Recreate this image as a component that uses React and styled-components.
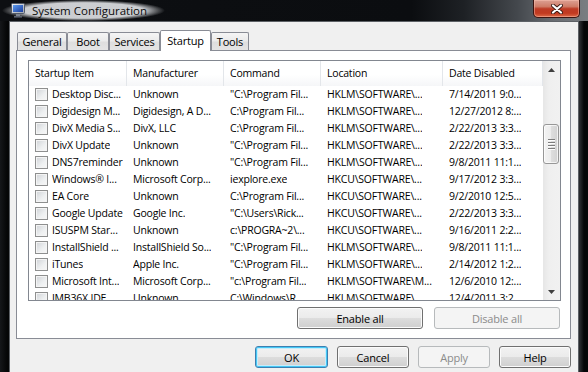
import React from 'react'
import styled, { createGlobalStyle } from 'styled-components'

const GlobalStyle = createGlobalStyle`
  html, body {
    margin: 0;
    padding: 0;
    background: #000;
    overflow: hidden;
  }
  body {
    font-family: "Segoe UI", "Open Sans", sans-serif;
    font-size: 10.5px;
    letter-spacing: -0.2px;
    color: #000;
  }
  * { box-sizing: border-box; }
`

const COLS = [98, 97, 97, 122, 100]
const HEADERS = ['Startup Item', 'Manufacturer', 'Command', 'Location', 'Date Disabled']

const ROWS = [
  ['Desktop Disc...', 'Unknown', '"C:\\Program Fil...', 'HKLM\\SOFTWARE\\...', '7/14/2011 9:0...'],
  ['Digidesign M...', 'Digidesign, A D...', 'C:\\Program Fil...', 'HKLM\\SOFTWARE\\...', '12/27/2012 8:...'],
  ['DivX Media S...', 'DivX, LLC', 'C:\\Program Fil...', 'HKLM\\SOFTWARE\\...', '2/22/2013 3:3...'],
  ['DivX Update', 'Unknown', '"C:\\Program Fil...', 'HKLM\\SOFTWARE\\...', '2/22/2013 3:3...'],
  ['DNS7reminder', 'Unknown', '"C:\\Program Fil...', 'HKLM\\SOFTWARE\\...', '9/8/2011 11:1...'],
  ['Windows® I...', 'Microsoft Corp...', 'iexplore.exe', 'HKCU\\SOFTWARE\\...', '9/17/2012 3:3...'],
  ['EA Core', 'Unknown', 'C:\\Program Fil...', 'HKCU\\SOFTWARE\\...', '9/2/2010 12:5...'],
  ['Google Update', 'Google Inc.', '"C:\\Users\\Rick...', 'HKCU\\SOFTWARE\\...', '2/22/2013 3:3...'],
  ['ISUSPM Star...', 'Unknown', 'c:\\PROGRA~2\\...', 'HKCU\\SOFTWARE\\...', '9/16/2011 2:2...'],
  ['InstallShield ...', 'InstallShield So...', '"C:\\Program Fil...', 'HKLM\\SOFTWARE\\...', '9/8/2011 11:1...'],
  ['iTunes', 'Apple Inc.', '"C:\\Program Fil...', 'HKLM\\SOFTWARE\\...', '2/14/2012 1:2...'],
  ['Microsoft Int...', 'Microsoft Corp...', '"c:\\Program Fil...', 'HKLM\\SOFTWARE\\M...', '12/6/2010 12:...'],
  ['JMB36X IDE...', 'Unknown', 'C:\\Windows\\R...', 'HKLM\\SOFTWARE\\...', '12/4/2011 3:2...'],
]

const TABS = [
  { name: 'General', w: 50 },
  { name: 'Boot', w: 42 },
  { name: 'Services', w: 51 },
  { name: 'Startup', w: 51, active: true },
  { name: 'Tools', w: 38 },
]

function MonitorIcon() {
  return (
    <svg width="14" height="15" viewBox="0 0 14 15">
      <defs>
        <linearGradient id="bezel" x1="0" y1="0" x2="1" y2="1">
          <stop offset="0" stopColor="#f4f5f7" />
          <stop offset="1" stopColor="#9aa1ab" />
        </linearGradient>
        <linearGradient id="screen" x1="0" y1="0" x2="1" y2="1">
          <stop offset="0" stopColor="#5d9cf0" />
          <stop offset="1" stopColor="#1b3d9c" />
        </linearGradient>
      </defs>
      <rect x="0.5" y="0.5" width="13" height="10" rx="1" fill="url(#bezel)" stroke="#525a68" />
      <rect x="2" y="2" width="10" height="7" fill="url(#screen)" />
      <rect x="5" y="11" width="4" height="2" fill="#7d8490" />
      <rect x="3" y="13" width="8" height="1.6" fill="#5c6370" />
    </svg>
  )
}

function CloseGlyph() {
  return (
    <svg width="12" height="10" viewBox="0 0 12 10">
      <path d="M2 1.5 L10 8.5 M10 1.5 L2 8.5" stroke="#3b1a14" strokeWidth="4" strokeLinecap="round" />
      <path d="M2 1.5 L10 8.5 M10 1.5 L2 8.5" stroke="#fff" strokeWidth="2.2" strokeLinecap="round" />
    </svg>
  )
}

function Arrow({ down }) {
  return (
    <svg width="7" height="4" viewBox="0 0 7 4">
      <path d={down ? 'M0 0 H7 L3.5 4 Z' : 'M0 4 H7 L3.5 0 Z'} fill="#3f3f3f" />
    </svg>
  )
}

export default function App() {
  return (
    <Window>
      <GlobalStyle />
      <TitleBar>
        <TitleGlow>
          <MonitorIcon />
          <TitleText>System Configuration</TitleText>
        </TitleGlow>
        <CloseButton>
          <CloseGlyph />
        </CloseButton>
      </TitleBar>
      <Body>
        <Client>
          <TabStrip>
            {TABS.map(t => (
              <Tab key={t.name} $w={t.w} $active={t.active}>{t.name}</Tab>
            ))}
          </TabStrip>
          <Panel>
            <ListView>
              <Grid>
                <Header>
                  {HEADERS.map((h, i) => (
                    <HeaderCell key={h} $w={COLS[i]}>{h}</HeaderCell>
                  ))}
                </Header>
                {ROWS.map((r, ri) => (
                  <Row key={ri}>
                    <Cell $w={COLS[0]}>
                      <Checkbox />
                      <CellText>{r[0]}</CellText>
                    </Cell>
                    {r.slice(1).map((v, ci) => (
                      <Cell key={ci} $w={COLS[ci + 1]}>
                        <CellText>{v}</CellText>
                      </Cell>
                    ))}
                  </Row>
                ))}
              </Grid>
              <ScrollBar>
                <ArrowButton><Arrow /></ArrowButton>
                <Track>
                  <Thumb>
                    <Grip />
                    <Grip />
                    <Grip />
                    <Grip />
                  </Thumb>
                </Track>
                <ArrowButton><Arrow down /></ArrowButton>
              </ScrollBar>
            </ListView>
            <PanelButtons>
              <Button $w={126}>Enable all</Button>
              <Button $w={126} $disabled>Disable all</Button>
            </PanelButtons>
          </Panel>
          <DialogButtons>
            <Button $w={73} $default>OK</Button>
            <Button $w={72}>Cancel</Button>
            <Button $w={72} $disabled>Apply</Button>
            <Button $w={72}>Help</Button>
          </DialogButtons>
        </Client>
      </Body>
    </Window>
  )
}

const Window = styled.div`
  width: 588px;
  height: 372px;
  display: flex;
  flex-direction: column;
  overflow: hidden;
  background: linear-gradient(90deg, #15171a 0%, #050607 1.2%, #050607 98%, #2a2c2f 98.6%, #050607 99.3%);
`

const TitleBar = styled.div`
  height: 21px;
  flex: none;
  display: flex;
  align-items: stretch;
  background: linear-gradient(90deg, #0d0f12 0%, #0b0d10 70%, #1e2125 79%, #44484d 88%, #676b70 94%, #7a7e82 100%);
`

const TitleGlow = styled.div`
  display: flex;
  align-items: center;
  gap: 7px;
  margin-left: 2px;
  padding: 0 18px 0 9px;
  background: radial-gradient(closest-side, rgba(210, 212, 215, 0.97) 74%, rgba(210, 212, 215, 0) 100%);
`

const TitleText = styled.span`
  font-size: 11.5px;
  letter-spacing: 0;
  color: #0b0b0b;
  line-height: 21px;
  padding-bottom: 1px;
`

const CloseButton = styled.div`
  margin-left: auto;
  margin-right: 8px;
  width: 47px;
  height: 18px;
  display: flex;
  align-items: center;
  justify-content: center;
  border: 1px solid #3c1410;
  border-top: none;
  border-radius: 0 0 5px 5px;
  background: linear-gradient(#dca093 0%, #cf7d68 38%, #bd3b25 52%, #c23a20 78%, #dd6a48 100%);
  box-shadow: inset 0 0 0 1px rgba(255, 200, 185, 0.45);
`

const Body = styled.div`
  flex: 1;
  min-height: 0;
  display: flex;
  padding: 0 9px;
`

const Client = styled.div`
  flex: 1;
  display: flex;
  flex-direction: column;
  background: #f0f0f0;
  border: 1px solid #5d6166;
  border-bottom: none;
  padding: 0 7px 0 6px;
`

const TabStrip = styled.div`
  position: relative;
  z-index: 1;
  display: flex;
  align-items: flex-end;
  height: 20px;
  margin-top: 8px;
  padding-left: 1px;
`

const Tab = styled.div`
  width: ${p => p.$w}px;
  height: ${p => (p.$active ? 21 : 18)}px;
  margin-bottom: ${p => (p.$active ? -1 : 0)}px;
  display: flex;
  align-items: center;
  justify-content: center;
  padding-bottom: ${p => (p.$active ? 2 : 0)}px;
  border: 1px solid #898c95;
  border-bottom: none;
  border-radius: 2px 2px 0 0;
  background: ${p =>
    p.$active ? '#fff' : 'linear-gradient(#f5f5f5, #ebebeb 45%, #dedede 55%, #e4e4e4)'};
  font-size: 11px;
  white-space: nowrap;
`

const Panel = styled.div`
  height: 289px;
  flex: none;
  display: flex;
  flex-direction: column;
  background: #fff;
  border: 1px solid #898c95;
  padding: 9px 9px 0 11px;
`

const ListView = styled.div`
  height: 241px;
  display: flex;
  border: 1px solid #828790;
  background: #fff;
`

const Grid = styled.div`
  flex: 1;
  min-width: 0;
  display: flex;
  flex-direction: column;
  overflow: hidden;
`

const Header = styled.div`
  height: 25px;
  flex: none;
  display: flex;
  background: linear-gradient(#fff, #fff 55%, #f5f6f8);
`

const HeaderCell = styled.div`
  width: ${p => p.$w}px;
  flex: none;
  padding-left: 6px;
  line-height: 24px;
  border-right: 1px solid #e3e6ea;
  white-space: nowrap;
  overflow: hidden;
`

const Row = styled.div`
  height: 17px;
  flex: none;
  display: flex;
  align-items: center;
`

const Cell = styled.div`
  width: ${p => p.$w}px;
  flex: none;
  display: flex;
  align-items: center;
  gap: 4px;
  padding-left: 6px;
  padding-right: 1px;
  overflow: hidden;
`

const CellText = styled.span`
  white-space: nowrap;
  overflow: hidden;
  line-height: 17px;
`

const Checkbox = styled.span`
  width: 13px;
  height: 13px;
  flex: none;
  border: 1px solid #8e8f8f;
  background: linear-gradient(135deg, #cfd2d6, #eef0f1 60%, #f7f7f7);
  box-shadow: inset 0 0 0 1px #f4f4f4;
`

const ScrollBar = styled.div`
  width: 17px;
  flex: none;
  display: flex;
  flex-direction: column;
  background: linear-gradient(90deg, #e6e6e6, #efefef 35%, #f1f1f1);
`

const ArrowButton = styled.div`
  height: 17px;
  flex: none;
  display: flex;
  align-items: center;
  justify-content: center;
`

const Track = styled.div`
  flex: 1;
  padding-top: 46px;
`

const Thumb = styled.div`
  height: 40px;
  width: 16px;
  display: flex;
  flex-direction: column;
  align-items: center;
  justify-content: center;
  gap: 1px;
  border: 1px solid #979797;
  border-radius: 3px;
  background: linear-gradient(90deg, #f3f3f3, #ececec 50%, #dedede 51%, #d2d2d2);
  box-shadow: inset 0 0 0 1px rgba(255, 255, 255, 0.7);
`

const Grip = styled.span`
  width: 7px;
  height: 1px;
  background: #7d7d7d;
  box-shadow: 0 1px 0 #fdfdfd;
  margin-bottom: 1px;
`

const PanelButtons = styled.div`
  display: flex;
  justify-content: flex-end;
  gap: 11px;
  margin-top: 6px;
  padding-right: 1px;
`

const DialogButtons = styled.div`
  display: flex;
  justify-content: flex-end;
  gap: 9px;
  margin-top: 7px;
`

const Button = styled.div`
  width: ${p => p.$w}px;
  height: 22px;
  display: flex;
  align-items: center;
  justify-content: center;
  font-size: 11px;
  border-radius: 3px;
  border: 1px solid ${p => (p.$disabled ? '#b7babc' : p.$default ? '#3c7fb1' : '#707070')};
  color: ${p => (p.$disabled ? '#8b8b8b' : '#000')};
  background: ${p =>
    p.$disabled ? '#f4f4f4' : 'linear-gradient(#f2f2f2 0%, #ebebeb 50%, #dddddd 50%, #cfcfcf 100%)'};
  box-shadow: ${p =>
    p.$disabled ? 'none' : p.$default ? 'inset 0 0 0 1px #45c8f5, inset 0 0 0 2px #c6ecfb' : 'inset 0 0 0 1px #fbfbfb'};
`
